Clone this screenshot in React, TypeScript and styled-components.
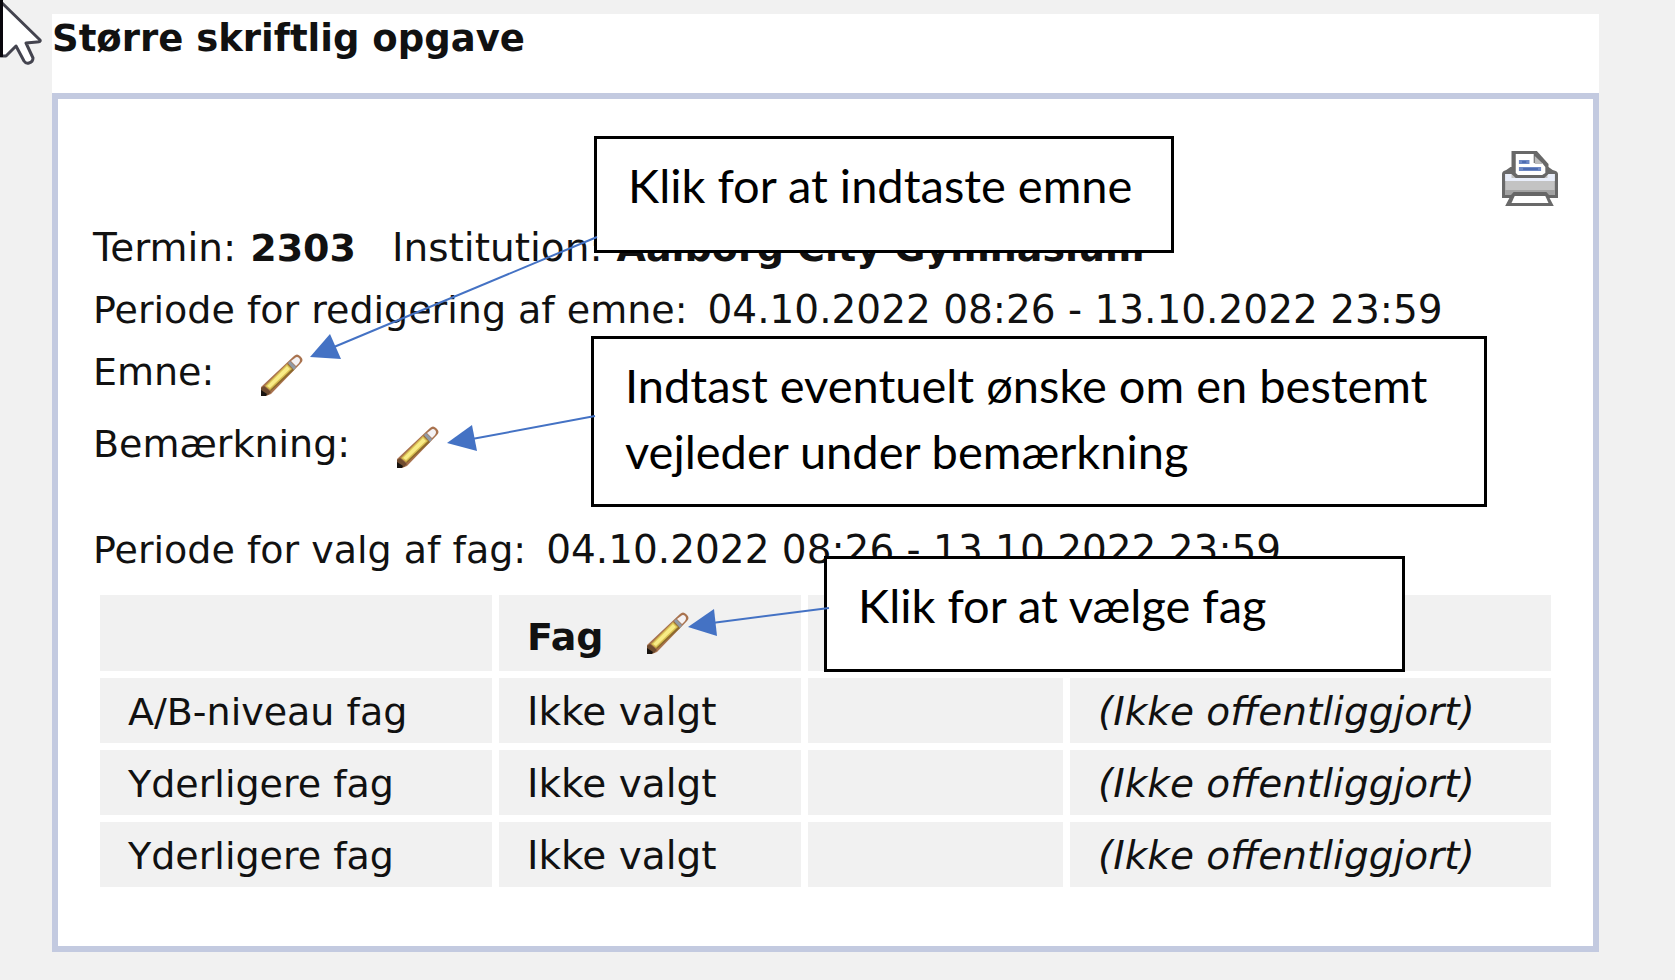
import React from "react";
import styled, { createGlobalStyle } from "styled-components";

const GlobalStyle = createGlobalStyle`
  * { box-sizing: border-box; }
  body {
    margin: 0;
    background: #f1f1f1;
    color: #111;
    font-family: "DejaVu Sans", Verdana, sans-serif;
    font-size: 38px;
  }
`;

const Page = styled.div`
  position: relative;
  min-height: 100vh;
  padding: 14px 76px 28px 52px;
  overflow: hidden;
`;

const Title = styled.h1`
  margin: 0;
  padding-bottom: 30px;
  background: #fff;
  font-size: 37px;
  line-height: 49px;
  white-space: nowrap;
`;

const Panel = styled.main`
  padding: 51px 35px 52px;
  border: 6px solid #c3cae0;
  background: #fff;
`;

const Toolbar = styled.div`
  display: flex;
  justify-content: flex-end;
  margin-bottom: 10px;
`;

const IconButton = styled.button`
  display: block;
  flex: none;
  padding: 0;
  border: 0;
  background: none;
  cursor: pointer;
  svg { display: block; }
`;

const Line = styled.div<{ $after?: number; $gap?: number }>`
  display: flex;
  align-items: center;
  gap: ${(p) => p.$gap ?? 20}px;
  margin-bottom: ${(p) => p.$after ?? 0}px;
  line-height: 62px;
  white-space: nowrap;
  button { padding-top: 6px; }
`;

const Pair = styled.span`
  display: flex;
  gap: 14px;
  font-size: 39px;
  b { font-size: 38px; }
`;

const Period = styled.span`
  font-size: 39px;
`;

const Subjects = styled.table`
  width: 100%;
  table-layout: fixed;
  border-collapse: separate;
  border-spacing: 7px;
  line-height: 60px;
  text-align: left;
  white-space: nowrap;
`;

const Col = styled.col<{ $width?: number }>`
  width: ${(p) => (p.$width ? `${p.$width}px` : "auto")};
`;

const HeadCell = styled.th`
  height: 76px;
  padding: 12px 28px 4px;
  background: #f1f1f1;
  font-size: 38px;
`;

const HeadContent = styled.div`
  display: flex;
  align-items: center;
  gap: 42px;
  height: 60px;
  svg { margin-bottom: 8px; }
`;

const Cell = styled.td<{ $italic?: boolean }>`
  height: 65px;
  padding: 4px 28px 1px;
  background: #f1f1f1;
  font-size: 39px;
  font-style: ${(p) => (p.$italic ? "italic" : "normal")};
`;

const RowHead = styled(Cell).attrs({ as: "th", scope: "row" })`
  font-size: 38px;
  font-weight: 400;
`;

const Callout = styled.aside<{ $x: number; $y: number; $w: number; $h: number }>`
  position: absolute;
  left: ${(p) => p.$x}px;
  top: ${(p) => p.$y}px;
  width: ${(p) => p.$w}px;
  min-height: ${(p) => p.$h}px;
  padding: 13px 31px;
  border: 3px solid #000;
  background: #fff;
  color: #000;
  font-family: Lato, Carlito, Calibri, sans-serif;
  font-size: 47px;
  line-height: 66px;
`;

const Overlay = styled.svg`
  position: absolute;
  left: 0;
  top: 0;
  pointer-events: none;
`;

const Pencil = ({ label }: { label: string }) => (
  <IconButton type="button" aria-label={label}>
    <svg width="44" height="44" viewBox="0 0 44 44">
      <path d="M1 34 34 3Q37 0 40 3L41 4Q44 7 41 10L11 41 6 43H1Z" fill="#a9734f" />
      <path d="M5 33 28 11 34 17 11 38Z" fill="#8c6a2c" />
      <path d="M5 33 27 11 32 16 10 37Z" fill="#d9bf52" />
      <path d="M7 33 27 13 30 16 10 35Z" fill="#f8ec86" />
      <path d="M28 10 30 8 36 14 34 17Z" fill="#8f9aa6" />
      <path d="M31 8 35 5Q37 3 39 5Q41 7 39 10L36 13Z" fill="#f4f2f4" />
      <path d="M1 35 4 33 11 39 8 42 1 43Z" fill="#6f4c30" />
      <path d="M1 37 7 41 6 43H1Z" fill="#17130f" />
    </svg>
  </IconButton>
);

const Printer = () => (
  <IconButton type="button" aria-label="Udskriv">
    <svg width="56" height="57" viewBox="2 0 53 57" preserveAspectRatio="none">
      <path d="M2 24Q2 21 6 20L10 17H46L50 20Q55 21 55 24V48H47L51 56H5L9 48H2Z" fill="#696969" />
      <path d="M5 24H52V45H5Z" fill="#c3c3c3" />
      <path d="M5 24H11V28H45V24H52V31H5Z" fill="#e9eefa" />
      <path d="M5 40H52V45H5Z" fill="#a2a2a2" />
      <path d="M13 42H44L49 48H8Z" fill="#666" />
      <path d="M14 46H43L46 53H11Z" fill="#fff" />
      <path d="M2 48H7L5 54H2ZM50 48H55V56H53Z" fill="#fff" />
      <path d="M11 1H35L46 14V24L42 28H15L11 24Z" fill="#686868" />
      <path d="M15 4H32V13H40L43 17V23L40 25H17L15 23Z" fill="#fff" />
      <path d="M33 6 41 14H33Z" fill="#bbb" />
      <path d="M18 12H28M18 19H39" stroke="#6d88c4" strokeWidth="4" />
      <path d="M21 12H25M22 19H36" stroke="#4d6bb0" strokeWidth="2" />
    </svg>
  </IconButton>
);

const subjects = ["A/B-niveau fag", "Yderligere fag", "Yderligere fag"];

export default function App() {
  return (
    <>
      <GlobalStyle />
      <Page>
        <Title>Større skriftlig opgave</Title>
        <Panel>
          <Toolbar>
            <Printer />
          </Toolbar>
          <Line $gap={36}>
            <Pair>Termin: <b>2303</b></Pair>
            <Pair>Institution: <b>Aalborg City Gymnasium</b></Pair>
          </Line>
          <Line>
            <span>Periode for redigering af emne:</span>
            <Period>04.10.2022 08:26 - 13.10.2022 23:59</Period>
          </Line>
          <Line $gap={46} $after={10}>
            <span>Emne:</span>
            <Pencil label="Rediger emne" />
          </Line>
          <Line $gap={46} $after={44}>
            <span>Bemærkning:</span>
            <Pencil label="Rediger bemærkning" />
          </Line>
          <Line $after={7}>
            <span>Periode for valg af fag:</span>
            <Period>04.10.2022 08:26 - 13.10.2022 23:59</Period>
          </Line>
          <Subjects>
            <colgroup>
              <Col $width={392} />
              <Col $width={302} />
              <Col $width={255} />
              <Col />
            </colgroup>
            <thead>
              <tr>
                <HeadCell />
                <HeadCell scope="col">
                  <HeadContent>
                    Fag
                    <Pencil label="Vælg fag" />
                  </HeadContent>
                </HeadCell>
                <HeadCell />
                <HeadCell />
              </tr>
            </thead>
            <tbody>
              {subjects.map((name, i) => (
                <tr key={i}>
                  <RowHead>{name}</RowHead>
                  <Cell>Ikke valgt</Cell>
                  <Cell />
                  <Cell $italic>(Ikke offentliggjort)</Cell>
                </tr>
              ))}
            </tbody>
          </Subjects>
        </Panel>

        <Callout $x={594} $y={136} $w={580} $h={117}>Klik for at indtaste emne</Callout>
        <Callout $x={591} $y={336} $w={896} $h={171}>
          Indtast eventuelt ønske om en bestemt vejleder under bemærkning
        </Callout>
        <Callout $x={824} $y={556} $w={581} $h={116}>Klik for at vælge fag</Callout>

        <Overlay width="840" height="680" viewBox="0 0 840 680" aria-hidden="true">
          <g stroke="#4472c4" strokeWidth="2">
            <path d="M597 237 334 347" />
            <path d="M595 416 472 439" />
            <path d="M829 608 712 623" />
          </g>
          <g fill="#4472c4">
            <path d="M310 357 330 334 341 359Z" />
            <path d="M447 443 472 425 477 451Z" />
            <path d="M688 627 714 609 717 636Z" />
          </g>
          <path
            d="M1 2 40 40Q41 42 37 42L26 43 33 58Q33 62 29 63Q26 64 24 61L16 46 6 56H1Z"
            fill="#fff"
            stroke="#44444f"
            strokeWidth="3"
            strokeLinejoin="round"
          />
          <path d="M0 0H3V57H0Z" fill="#08060c" />
        </Overlay>
      </Page>
    </>
  );
}
